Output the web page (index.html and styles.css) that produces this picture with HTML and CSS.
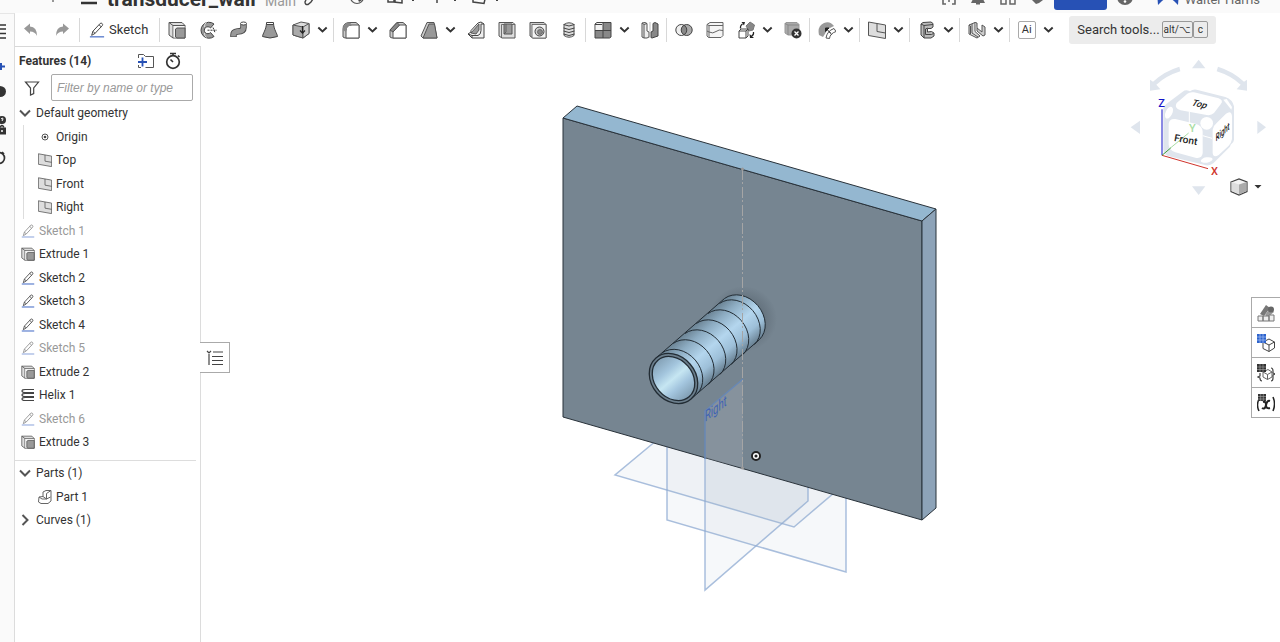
FILE: index.html
```html
<!DOCTYPE html>
<html lang="en">
<head>
    <meta charset="UTF-8">
    <meta name="viewport" content="width=device-width, initial-scale=1.0">
    <title>transducer_wall</title>
    <link rel="stylesheet" href="styles.css">
</head>
<body>
    <!-- shared icons -->
    <svg class="sprite" aria-hidden="true">
        <symbol id="i-chevron" viewBox="0 0 10 10"><path d="M1.2 3.2 5 6.8l3.8-3.6" fill="none" stroke="#333" stroke-width="1.7"/></symbol>
        <symbol id="i-fold" viewBox="0 0 12 12"><path d="M1 3.5 6 8.5l5-5" fill="none" stroke="#555" stroke-width="2"/></symbol>
        <symbol id="i-sketch" viewBox="0 0 18 18"><path d="M3 15l1.4-4.6L12.6 1.6q1.2-.8 2.2.2t.2 2.2L6.8 12.8zM4.4 10.4l2.4 2.4M11.2 3l2.5 2.4" fill="none" stroke="#444" stroke-width="1.1"/><path d="M1 16.7h16" stroke="#3f67c4" stroke-width="1.3"/></symbol>
        <symbol id="i-extrude" viewBox="0 0 18 18"><path d="M1 1.500h13l3 3V17H5l-4-3z" fill="#ddd" stroke="#555"/><path d="M1 1.500l4 3h12M5 4.500V17" fill="none" stroke="#555"/><path d="M5.500 5h11v11.500h-11z" fill="#f5f5f5"/><path d="M7.500 8l1.500-1h8v10H9l-1.500-1z" fill="#999" stroke="#555"/></symbol>
        <symbol id="i-plane" viewBox="0 0 18 18"><path d="M.5 1l17 3v13.500l-17-3z" fill="#ddd" stroke="#555"/><path d="M9 2.500v8l8.500 1.500" fill="none" stroke="#555"/></symbol>
    </svg>

    <header class="topbar">
        <div class="doc">
            <svg class="doc-mark" width="10" height="8" viewBox="0 0 10 8"><path d="M5 0v4" stroke="#555" stroke-width="1.2"/></svg>
            <svg width="16" height="14" viewBox="0 0 16 14"><path d="M0 5h16M0 11h16" stroke="#333" stroke-width="2.500"/></svg>
            <h1>transducer_wall</h1>
            <span class="branch">Main</span>
            <svg width="12" height="14" viewBox="0 0 12 14"><path d="M3 8l-1 2q0 3 3 2.500l3-2.500 2-3" fill="none" stroke="#444" stroke-width="1.400"/></svg>
        </div>
        <div class="doc-tools">
            <svg class="eye" width="16" height="14" viewBox="0 0 16 14"><circle cx="8" cy="5" r="6.500" fill="none" stroke="#555" stroke-width="1.200"/><path d="M8 5l2 5 3-2z" fill="#444"/></svg>
            <svg width="28" height="14" viewBox="0 0 28 14"><path d="M1 10V4h7v6zM7 10V4h8v7z" fill="none" stroke="#444" stroke-width="1.500"/><path d="M24 7l2 2 2-2" fill="none" stroke="#444"/></svg>
            <svg width="28" height="14" viewBox="0 0 28 14"><path d="M8 4v7" stroke="#444" stroke-width="1.500"/><path d="M24 7l2 2 2-2" fill="none" stroke="#444"/></svg>
            <svg width="30" height="14" viewBox="0 0 30 14"><path d="M2 3v7l11 1.500L15 3" fill="none" stroke="#444" stroke-width="1.500"/><path d="M24 7l2 2 2-2" fill="none" stroke="#444"/></svg>
        </div>
        <div class="account">
            <svg width="14" height="14" viewBox="0 0 14 14"><path d="M4 12H1V3M10 12h3V3M6 9h2" fill="none" stroke="#666" stroke-width="1.600"/></svg>
            <svg width="16" height="14" viewBox="0 0 16 14"><path d="M3 1h10v6l2 4H1l2-4zM6 11h4v1.500H6z" fill="#666"/></svg>
            <svg width="16" height="14" viewBox="0 0 16 14"><path d="M1 5h5v7H1zM10 5h5v7h-5z" fill="none" stroke="#666" stroke-width="1.500"/></svg>
            <svg width="14" height="14" viewBox="0 0 14 14"><path d="M1 2h12v6l-4 3-3 1-2-2-3-3z" fill="#666"/></svg>
            <button type="button" class="share">Share</button>
            <svg width="16" height="14" viewBox="0 0 16 14"><circle cx="8" cy="5" r="8" fill="#666"/><circle cx="8" cy="9.500" r="1.300" fill="#fff"/></svg>
            <svg class="avatar" width="22" height="14" viewBox="0 0 22 14"><path d="M0 0h22l-1 13-4-4q-6-5-12 0l-4 4z" fill="#2751b5"/></svg>
            <span class="user">Walter Harris</span>
        </div>
    </header>

    <div class="app">
        <nav class="rail">
            <svg width="15" height="200" viewBox="0 0 15 200">
                <path d="M0 11h6M0 15h6M0 19.500h6M0 24h6" stroke="#333" stroke-width="1.600"/>
                <path d="M0 52.500h5M1 49v7" stroke="#2751b5" stroke-width="2"/>
                <ellipse cx="0" cy="77.500" rx="6" ry="5.500" fill="#333"/>
                <circle cx="2" cy="106" r="4" fill="#333"/><path d="M1 105q2-2 2 0l-1 2" fill="none" stroke="#fff"/>
                <path d="M0 113.500h6v7H0z" fill="#333"/><path d="M0 113.500q2-4 4 0" fill="none" stroke="#333" stroke-width="1.500"/><circle cx="2" cy="117" r="1" fill="#fff"/>
                <circle cx="-1" cy="144" r="5.500" fill="none" stroke="#333" stroke-width="1.700"/><path d="M2 138l2 2" stroke="#333" stroke-width="1.700"/>
            </svg>
        </nav>

        <div class="workspace">
            <div class="toolbar">
                <div class="group history">
                    <button type="button" class="tool" aria-label="Undo"><svg viewBox="0 0 18 18"><path d="M2 7.500L8 2.500v3q7 .4 7 9.500-1.800-4.500-7-4.500v2.500z" fill="#999"/></svg></button>
                    <button type="button" class="tool" aria-label="Redo"><svg viewBox="0 0 18 18"><path d="M16 7.500l-6-5v3q-7 .4-7 9.500 1.800-4.500 7-4.500v2.500z" fill="#999"/></svg></button>
                </div>
                <div class="group sketch">
                    <button type="button" class="tool-text"><svg width="16" height="16"><use href="#i-sketch"/></svg>Sketch</button>
                </div>
                <div class="group">
                    <button type="button" class="tool" aria-label="Extrude"><svg><use href="#i-extrude"/></svg></button>
                    <button type="button" class="tool" aria-label="Revolve"><svg viewBox="0 0 18 18"><path d="M15 3A8 8 0 1 0 15 15.500l-3.500-4a3.500 3.500 0 1 1 0-4.500z" fill="#999" stroke="#444"/><path d="M7.500 1.500Q5 3 5.500 6M7.500 16.500Q5 15 5.500 12" fill="none" stroke="#ddd"/><path d="M8.500 9.200H18M14 6.500l2 5" stroke="#333" stroke-dasharray="2 1"/></svg></button>
                    <button type="button" class="tool" aria-label="Sweep"><svg viewBox="0 0 18 18"><path d="M3.500 16V14q0-3 4-3.500 6 0 6-4V3" fill="none" stroke="#444" stroke-width="6.500"/><path d="M3.500 15.400V14q0-3 4-3.500 6 0 6-4V3" fill="none" stroke="#999" stroke-width="4.800"/><ellipse cx="13.500" cy="2.500" rx="3" ry="1.500" fill="#fff" stroke="#444"/></svg></button>
                    <button type="button" class="tool" aria-label="Loft"><svg viewBox="0 0 18 18"><path d="M5.500 2.500C5 9 2 12 1.500 15.500q7.500 3 15 0C16 12 13 9 12.500 2.500z" fill="#999" stroke="#444"/><path d="M5.500 1.500h7v2h-7z" fill="#fff" stroke="#444"/></svg></button>
                    <button type="button" class="tool" aria-label="Thicken"><svg viewBox="0 0 18 18"><path d="M1 4l8-3 8 1.500v10L11 17 1 14z" fill="#ddd" stroke="#555"/><path d="M1 4l10 2V17L1 14z" fill="#aaa" stroke="#555"/><path d="M11 6l6-3.500v10L11 17z" fill="#ccc" stroke="#555"/><path d="M10.500 5v7M8 9.500l2.500 2.700L13 9.500" fill="none" stroke="#222" stroke-width="1.200"/></svg></button>
                    <button type="button" class="more" aria-label="More solids"><svg><use href="#i-chevron"/></svg></button>
                </div>
                <div class="group">
                    <button type="button" class="tool" aria-label="Fillet"><svg viewBox="0 0 18 18"><path d="M1 16V8q0-6.500 7-6.500h6L17 4v13H3z" fill="#ccc" stroke="#555"/><path d="M4 17V10q0-6 6-6h7v13z" fill="#fff" stroke="#555"/><path d="M1 9q0-7.500 7-7.500L10 4q-6 0-6 7z" fill="#888"/></svg></button>
                    <button type="button" class="more" aria-label="More fillets"><svg><use href="#i-chevron"/></svg></button>
                    <button type="button" class="tool" aria-label="Chamfer"><svg viewBox="0 0 18 18"><path d="M1 16V9l7-7.500h6L17 4v13H3z" fill="#ccc" stroke="#555"/><path d="M4 17v-6l6.500-7H17v13z" fill="#fff" stroke="#555"/><path d="M1 9l7-7.500L10.500 4 4 11z" fill="#888" stroke="#555"/></svg></button>
                    <button type="button" class="tool" aria-label="Draft"><svg viewBox="0 0 18 18"><path d="M1 15L7 1.500h7L17 17H3z" fill="#ccc" stroke="#555"/><path d="M3 17L9 3h5.500L17 17z" fill="#999" stroke="#555"/></svg></button>
                    <button type="button" class="more" aria-label="More drafts"><svg><use href="#i-chevron"/></svg></button>
                    <button type="button" class="tool" aria-label="Rib"><svg viewBox="0 0 18 18"><path d="M1 13l3-2V9.500L11 2l3-1 3 2v14H5z" fill="#eee" stroke="#444"/><path d="M4 12l8-9v6l-3 4z" fill="#999" stroke="#444" stroke-width=".8"/><path d="M1 13l4 1.500h6q3-1 3-5V3l3 0M5 14.500V17" fill="none" stroke="#444"/></svg></button>
                    <button type="button" class="tool" aria-label="Shell"><svg viewBox="0 0 18 18"><path d="M1 1.500h14l2 2V17H4l-3-2z" fill="#ddd" stroke="#555"/><path d="M3.500 3.500H17M3.500 3.500V17" stroke="#555" stroke-width=".8"/><path d="M6 3h8v10H6z" fill="#999" stroke="#555"/><path d="M8 3v8l-2 2" fill="none" stroke="#555" stroke-width=".8"/></svg></button>
                    <button type="button" class="tool" aria-label="Hole"><svg viewBox="0 0 18 18"><path d="M1 1.500h14l2 2V17H4l-3-2z" fill="#ccc" stroke="#555"/><path d="M3 3.500h14V17H3z" fill="#f4f4f4" stroke="#555" stroke-width=".8"/><circle cx="10.500" cy="10.500" r="4.500" fill="#ccc" stroke="#444"/><circle cx="11" cy="11" r="2.500" fill="#888" stroke="#555" stroke-width=".7"/></svg></button>
                    <button type="button" class="tool" aria-label="Thread"><svg viewBox="0 0 18 18"><path d="M4 3.500q5-3.500 10 0v11q-5 3.500-10 0z" fill="#ddd" stroke="#555"/><path d="M3.500 3.500q5.500 3 11 0M3.500 7q5.500 3 11 0M3.500 10q5.500 3 11 0M3.500 13q5.500 3 11 0" fill="none" stroke="#444"/></svg></button>
                </div>
                <div class="group">
                    <button type="button" class="tool" aria-label="Pattern"><svg viewBox="0 0 18 18"><path d="M1 3l2-1.500h14V16l-1.500 1H1z" fill="#888" stroke="#444"/><path d="M1.500 3.500L3 2h6v7H1.500z" fill="#f2f2f2"/><path d="M9 1.500V17M1 9.500h16M1 3.500h7" fill="none" stroke="#444"/></svg></button>
                    <button type="button" class="more" aria-label="More patterns"><svg><use href="#i-chevron"/></svg></button>
                    <button type="button" class="tool" aria-label="Mirror"><svg viewBox="0 0 18 18"><path d="M1 2l3-.5 2 1V10l2 1v5l-2 1H3l-2-1z" fill="#eee" stroke="#555"/><path d="M1 2l2 1.500V17M3 3.500l3-1" fill="none" stroke="#555"/><path d="M17 3l-3-1.500-2 1V10l-2 1v5.500l1 .5 6-2z" fill="#888" stroke="#444"/><path d="M9 1v16" stroke="#aaa" stroke-width=".8"/></svg></button>
                </div>
                <div class="group">
                    <button type="button" class="tool" aria-label="Boolean"><svg viewBox="0 0 18 18"><circle cx="6.300" cy="9" r="5.500" fill="#eee"/><circle cx="11.700" cy="9" r="5.500" fill="#aaa"/><path d="M9 4.200a5.500 5.500 0 0 1 0 9.600 5.500 5.500 0 0 1 0-9.600" fill="#888"/><g fill="none" stroke="#444"><circle cx="6.300" cy="9" r="5.500"/><circle cx="11.700" cy="9" r="5.500"/></g></svg></button>
                    <button type="button" class="tool" aria-label="Split"><svg viewBox="0 0 18 18"><path d="M1 3.500l3-2h13v13l-2 2H2.500L1 15z" fill="#f5f5f5" stroke="#666"/><path d="M1 3.500l2 1h14M3 4.500v12M1 10l2 1q4 2 7-.5t7-1" fill="none" stroke="#666"/></svg></button>
                    <button type="button" class="tool" aria-label="Transform"><svg viewBox="0 0 18 18"><path d="M9 5l4-4 4.500 3-1.500 5-4 1z" fill="#888" stroke="#777"/><path d="M2 10h7v7H2zM2 10l2-2h7l-2 2M11 8v7l-2 2" fill="#fff" stroke="#444"/><path d="M3.500 7.500q-.5-3 2-4.500" fill="none" stroke="#222" stroke-width="1.200"/><path d="M4.500 1H8L7 4.500zM12.500 13l.5 4h4z" fill="#222"/><path d="M16.500 11q.5 3-2 4" fill="none" stroke="#222" stroke-width="1.200"/></svg></button>
                    <button type="button" class="more" aria-label="More booleans"><svg><use href="#i-chevron"/></svg></button>
                    <button type="button" class="tool" aria-label="Delete part"><svg viewBox="0 0 18 18"><path d="M1 2.500l1-1h11l2 2V14H4l-3-2z" fill="#aaa" stroke="#999"/><path d="M1 2.500l3 1.500h11M4 4v10" fill="none" stroke="#888"/><circle cx="12.500" cy="12.500" r="5" fill="#333"/><path d="M10.500 10.500l4 4m0-4l-4 4" stroke="#fff" stroke-width="1.300"/></svg></button>
                </div>
                <div class="group">
                    <button type="button" class="tool" aria-label="Modify surface"><svg viewBox="0 0 18 18"><path d="M1 14Q-1 5 6 2q6-2.500 10 3l-6 3-5 8z" fill="#999"/><path d="M8 17q1-7 8-9.500l2 3q-6 2-6.500 7zM11 10.500l3 3.500" fill="#fff" stroke="#555"/><path d="M12.500 12L8 7.500M7.500 10.500V7h3.500z" fill="#222" stroke="#222"/></svg></button>
                    <button type="button" class="more" aria-label="More surfaces"><svg><use href="#i-chevron"/></svg></button>
                </div>
                <div class="group">
                    <button type="button" class="tool" aria-label="Plane"><svg><use href="#i-plane"/></svg></button>
                    <button type="button" class="more" aria-label="More planes"><svg><use href="#i-chevron"/></svg></button>
                </div>
                <div class="group">
                    <button type="button" class="tool" aria-label="Frame"><svg viewBox="0 0 18 18"><path d="M3 3l2-1.500 8-.5 2 1.500V6l-2 1.500H9.500V11l4-.5L16 12v3l-3 2H6l-3-3z" fill="#bbb" stroke="#444"/><path d="M3 3l3 1.500 9-1M6 4.500V17M7.500 13.500h6l2-1M9.500 7L7.500 8v5.500" fill="none" stroke="#444"/></svg></button>
                    <button type="button" class="more" aria-label="More frames"><svg><use href="#i-chevron"/></svg></button>
                </div>
                <div class="group">
                    <button type="button" class="tool" aria-label="Sheet metal"><svg viewBox="0 0 18 18"><path d="M1 4l6-2.500v9L12 15l-3 2-8-4z" fill="#ddd" stroke="#555"/><path d="M7 1.500L9 2v8l6 5 2-1V6l-3-2v7l-5-4" fill="#ccc" stroke="#555"/><path d="M4 3v9l6 4M1 4l1.500 1v8" fill="none" stroke="#555"/></svg></button>
                    <button type="button" class="more" aria-label="More sheet metal"><svg><use href="#i-chevron"/></svg></button>
                </div>
                <div class="group">
                    <button type="button" class="tool"><span class="ai">Ai</span></button>
                    <button type="button" class="more" aria-label="More custom features"><svg><use href="#i-chevron"/></svg></button>
                </div>
                <button type="button" class="search">Search tools... <span class="keys"><kbd>alt/⌥</kbd><kbd>c</kbd></span></button>
            </div>

            <div class="main">
                <aside class="features">
                    <div class="features-head">
                        <h2>Features (14)</h2>
                        <button type="button" aria-label="Add folder"><svg width="18" height="16" viewBox="0 0 18 16"><path d="M1.500 5V1.500h5l2 2h8v11h-8M1.500 12v2.500H4" fill="none" stroke="#555"/><path d="M1 9h9M5.500 4.500v9" stroke="#2751b5" stroke-width="1.800"/></svg></button>
                        <button type="button" aria-label="Regeneration times"><svg width="16" height="18" viewBox="0 0 16 18"><circle cx="8" cy="10" r="6.300" fill="none" stroke="#333" stroke-width="1.700"/><path d="M5 1.500h6M8 1.500v2M13 3.500l1.500 1.500M8 10L5.500 7.500" stroke="#333" stroke-width="1.600"/></svg></button>
                    </div>
                    <div class="filter">
                        <label for="filter"><svg width="16" height="16" viewBox="0 0 16 16"><path d="M1.500 2h13L9.700 8v5.500L6.500 15V8z" fill="none" stroke="#444" stroke-width="1.200"/></svg></label>
                        <input type="text" id="filter" placeholder="Filter by name or type" aria-label="Filter by name or type">
                    </div>
                    <div class="row folder"><svg><use href="#i-fold"/></svg>Default geometry</div>
                    <ul class="tree nested">
                        <li class="row"><svg viewBox="0 0 14 14"><circle cx="7" cy="7" r="3" fill="none" stroke="#555"/><circle cx="7" cy="7" r="1.300" fill="#444"/></svg>Origin</li>
                        <li class="row"><svg><use href="#i-plane"/></svg>Top</li>
                        <li class="row"><svg><use href="#i-plane"/></svg>Front</li>
                        <li class="row"><svg><use href="#i-plane"/></svg>Right</li>
                    </ul>
                    <ul class="tree">
                        <li class="row hidden"><svg><use href="#i-sketch"/></svg>Sketch 1</li>
                        <li class="row"><svg><use href="#i-extrude"/></svg>Extrude 1</li>
                        <li class="row"><svg><use href="#i-sketch"/></svg>Sketch 2</li>
                        <li class="row"><svg><use href="#i-sketch"/></svg>Sketch 3</li>
                        <li class="row"><svg><use href="#i-sketch"/></svg>Sketch 4</li>
                        <li class="row hidden"><svg><use href="#i-sketch"/></svg>Sketch 5</li>
                        <li class="row"><svg><use href="#i-extrude"/></svg>Extrude 2</li>
                        <li class="row"><svg viewBox="0 0 14 14"><path d="M13 1.500H4Q1 1.500 1 3t3 1.500h9M13 5.500H4Q1 5.500 1 7t3 1.500h9M13 9.500H4Q1 9.500 1 11t3 1.500h9" fill="none" stroke="#444" stroke-width="1.200"/></svg>Helix 1</li>
                        <li class="row hidden"><svg><use href="#i-sketch"/></svg>Sketch 6</li>
                        <li class="row"><svg><use href="#i-extrude"/></svg>Extrude 3</li>
                    </ul>
                    <div class="parts">
                        <div class="row folder"><svg><use href="#i-fold"/></svg>Parts (1)</div>
                        <ul class="tree part-list">
                            <li class="row"><svg viewBox="0 0 14 14"><path d="M1 7l4-.5V2l3-1.500h5V11l-3 2.500H3L.5 12z" fill="#fff" stroke="#666"/><path d="M1 7l3 2h4.500l4-2M8.500 9V3.500L13 .5M5 6.500L8.500 9" fill="none" stroke="#666"/></svg>Part 1</li>
                        </ul>
                        <div class="row folder closed"><svg><use href="#i-fold"/></svg>Curves (1)</div>
                    </div>
                </aside>

                <main class="canvas">
                    <svg class="scene" viewBox="201 46 1079 596">
                        <defs>
                            <linearGradient id="tube" gradientUnits="userSpaceOnUse" x1="656" y1="358" x2="691" y2="399">
                                <stop offset="0" stop-color="#6c8495"/>
                                <stop offset=".2" stop-color="#8cabc1"/>
                                <stop offset=".5" stop-color="#b4d6ee"/>
                                <stop offset=".75" stop-color="#9dbfd8"/>
                                <stop offset="1" stop-color="#657c8d"/>
                            </linearGradient>
                            <!-- runs along the long axis of the rotated bore ellipse -->
                            <linearGradient id="bore" gradientUnits="userSpaceOnUse" x1="649" y1="378" x2="698" y2="378">
                                <stop offset="0" stop-color="#83a0b5"/>
                                <stop offset=".3" stop-color="#a3c5dd"/>
                                <stop offset=".5" stop-color="#c6e6f2"/>
                                <stop offset=".7" stop-color="#a4c6df"/>
                                <stop offset="1" stop-color="#7f9cb1"/>
                            </linearGradient>
                            <radialGradient id="shade">
                                <stop offset=".6" stop-color="#55626d" stop-opacity=".5"/>
                                <stop offset="1" stop-color="#55626d" stop-opacity="0"/>
                            </radialGradient>
                        </defs>
                        <!-- reference planes -->
                        <g fill="#a9bacb" fill-opacity=".1" stroke="#8eaad2" stroke-opacity=".75" stroke-width="1.500">
                            <path d="M657 440l-42 35 179 52 41-35z"/>
                            <path d="M667 440v80l179 52v-80z"/>
                            <path d="M705 440v150l103-89v-30z"/>
                        </g>
                        <path d="M705 458v43l79 23 24-23v-13z" fill="#a9bacb" fill-opacity=".12"/>
                        <!-- wall plate -->
                        <g stroke="#29323a" stroke-linejoin="round">
                            <path d="M563 118l359 103v299L563 417z" fill="#768591"/>
                            <path d="M563 118l14-12 359 103-14 12z" fill="#94b7d0"/>
                            <path d="M922 221l14-12v299l-14 12z" fill="#8da3b8"/>
                        </g>
                        <path d="M705 411l38-32v89l-38-10z" fill="#a5acb4" fill-opacity=".35"/>
                        <path d="M743 379l-38 32v48" fill="none" stroke="#6888b5" stroke-width="1.500"/>
                        <text class="plane-label" transform="translate(705 422) rotate(-38) skewX(-38)">Right</text>
                        <!-- tube -->
                        <ellipse cx="743" cy="319" rx="34" ry="33" fill="url(#shade)"/>
                        <g stroke="#222c34" fill="none">
                            <path d="M656 358l68.500-59.500A27 22 49.500 0 1 759.500 339.500L691 399z" fill="url(#tube)"/>
                            <path d="M662 353A27 22 49.500 0 1 697 394"/>
                            <path d="M673.300 343.400A27 22 49.500 0 1 708.300 384.400"/>
                            <path d="M685 333.500A27 22 49.500 0 1 720 374.500"/>
                            <path d="M696.300 323.500A27 22 49.500 0 1 731.300 364.500"/>
                            <path d="M708 313.500A27 22 49.500 0 1 743 354.500"/>
                            <path d="M719.500 303.500A27 22 49.500 0 1 754.500 344.500"/>
                            <ellipse cx="673.500" cy="378.500" rx="27" ry="22" transform="rotate(49.500 673.500 378.500)" fill="#6b7e8c" stroke-width="1.300"/>
                            <ellipse cx="673.500" cy="378.500" rx="24" ry="19" transform="rotate(49.500 673.500 378.500)" fill="url(#bore)" stroke-width="1.300"/>
                        </g>
                        <path d="M742.500 169v299" stroke="#a5a5a5" stroke-dasharray="11 2 2 3"/>
                        <circle cx="742.500" cy="169" r="1.500" fill="#999"/>
                        <circle cx="742.500" cy="468" r="1.500" fill="#999"/>
                        <circle cx="756" cy="456" r="3.500" fill="#222" stroke="#222" stroke-width="3"/>
                        <circle cx="756" cy="456" r="2.300" fill="#222" stroke="#fff" stroke-width="1.500"/>
                    </svg>

                    <button type="button" class="list-toggle" aria-label="Toggle feature list"><svg width="18" height="18" viewBox="0 0 18 18"><path d="M1 2l2 2 2-2M3 5v11M7 3h10M6 7.500h11M6 11.500h11M6 15.500h11" fill="none" stroke="#444" stroke-width="1.200"/></svg></button>

                    <svg class="view-cube" width="148" height="144" viewBox="42 33 444 432">
                        <g fill="#dfe5ed">
                            <path d="M266 44l20 26h-40zM266 450l20-26h-40zM62 247l28-20v40zM468 247l-26-20v40z"/>
                            <path d="M120 137v-33l9 6q35-32 79-45l3 14q-42 13-72 40l12 14zM411 137v-33l-9 6q-35-32-78-45l-4 14q42 13 72 40l-12 14z"/>
                            <path d="M160 190q2-8 10-14l48-36q8-6 18-3l4 2q8-7 20-5l86 22q22 8 26 28v100q0 8-10 15l-2 6-50 50q-10 8-22 6l-114-28q-12-4-14-18z"/>
                        </g>
                        <g fill="#fff">
                            <path d="M200 174l32-28q8-6 20-4l74 18q16 6 6 18l-20 26q-8 8-22 6l-78-14q-22-6-12-22z"/>
                            <path d="M176 236q2-16 20-14l60 14q22 6 22 24v64q-2 18-22 14l-60-16q-20-6-20-24z"/>
                            <path d="M308 254q2-12 12-20l28-28q16-12 18 8v68q-2 12-10 20l-30 28q-16 10-18-6z"/>
                            <circle cx="290" cy="235" r="19"/>
                            <ellipse cx="177" cy="203" rx="10" ry="19" transform="rotate(25 177 203)"/>
                            <ellipse cx="290" cy="345" rx="18" ry="8" transform="rotate(-10 290 345)"/>
                            <path d="M340 164l10-2 16 24-2 8z"/>
                        </g>
                        <path d="M238 200v34M278 272l28 8" stroke="#fff" stroke-width="3"/>
                        <path d="M156 331V193" stroke="#1414c8" stroke-width="3"/>
                        <path d="M156 331l138 40" stroke="#d0342c" stroke-width="3"/>
                        <path d="M180 310l56-46" stroke="#a9dda5" stroke-width="3"/>
                        <path d="M156 331l26-22" stroke="#3fa03a" stroke-width="3"/>
                        <text class="face" transform="translate(242 181) rotate(12) skewX(-20)">Top</text>
                        <text class="face front" transform="translate(191 288) rotate(10)">Front</text>
                        <text class="face right" transform="translate(317 290) rotate(-42) skewX(-42)">Right</text>
                        <text class="axis z" x="145" y="186">Z</text>
                        <text class="axis x" x="303" y="389">X</text>
                        <text class="axis y" x="237" y="262">Y</text>
                    </svg>

                    <button type="button" class="view-menu" aria-label="View options"><svg width="32" height="18" viewBox="0 0 32 18"><path d="M1 4l8-3 8 3v9.500L9 17l-8-3.500z" fill="#f3f3f3" stroke="#444" stroke-width="1.200"/><path d="M9 6.500L16.500 4v9L9 16.500z" fill="#aaa"/><path d="M1.500 4L9 6.500V16l-7.500-3z" fill="#ddd"/><path d="M24.500 7h7L28 10.500z" fill="#333"/></svg></button>

                    <div class="side-tabs">
                        <button type="button" aria-label="Appearance"><svg viewBox="0 0 18 18"><path d="M3 10L9 1l4 3-6 8z" fill="#777"/><path d="M8 11l5-7 4 4-6 5z" fill="#999"/><circle cx="14" cy="5.500" r="3" fill="#666"/><path d="M1 12h5v5H1zM6 12h6v5H6zM12 11h5v6h-5z" fill="#eee" stroke="#777"/></svg></button>
                        <button type="button" aria-label="Configurations"><svg viewBox="0 0 18 18"><path d="M6 8l6-3 5.500 3v6L12 17.500 6 14.500zM6 8l6 3 5.500-3M12 11v6.500" fill="#fff" stroke="#444"/><path d="M0 0h9v9H0z" fill="#2d63cc"/><path d="M0 3h9M0 6h9M3 0v9M6 0v9" stroke="#9db9f0" stroke-width=".8"/></svg></button>
                        <button type="button" aria-label="Part properties"><svg viewBox="0 0 18 18"><path d="M6 8l5-2.500L15 8v5l-4.500 2.500L6 13zM6 8l4.500 2.500L15 8M10.500 10.500v5" fill="#fff" stroke="#666"/><path d="M3 9v3l-2 1 2 1q0 3 2 3M14 4q2 0 2 3v2l2 1-2 1v3q0 3-2 3" fill="none" stroke="#444" stroke-width="1.200"/><path d="M0 0h9v8H0z" fill="#333"/><path d="M0 3h9M0 5.500h9M3 0v8M6 0v8" stroke="#aaa" stroke-width=".6"/></svg></button>
                        <button type="button" aria-label="Variables"><svg viewBox="0 0 18 18"><path d="M2 5q-3 6 0 12M16 3q3 7 0 14" fill="none" stroke="#222" stroke-width="1.500"/><path d="M5 14q3 2 4-3t4-4M6 8q3-1 3 3t4 3" fill="none" stroke="#222" stroke-width="2"/><path d="M1 0h8v7H1z" fill="#333"/><path d="M1 2.500h8M1 5h8M3.700 0v7M6.300 0v7" stroke="#aaa" stroke-width=".6"/></svg></button>
                    </div>
                </main>
            </div>
        </div>
    </div>
</body>
</html>
```

FILE: styles.css
```css
* {
    box-sizing: border-box;
}

body {
    margin: 0;
    height: 100vh;
    display: flex;
    flex-direction: column;
    overflow: hidden;
    background-color: #fff;
    color: #333;
    font-family: Roboto, "Noto Sans", sans-serif;
    font-size: 13px;
}

button {
    padding: 0;
    border: none;
    background: none;
    color: inherit;
    font: inherit;
    cursor: pointer;
}

h1,
h2,
ul {
    margin: 0;
    padding: 0;
}

svg {
    display: block;
    flex-shrink: 0;
}

.sprite {
    position: absolute;
    width: 0;
    height: 0;
}

/* document bar, scrolled mostly out of view */
.topbar {
    display: flex;
    align-items: flex-end;
    height: 13px;
    flex-shrink: 0;
    overflow: hidden;
    padding: 0 20px 0 48px;
    background-color: #fafafa;
}

.doc,
.doc-tools,
.account {
    display: flex;
    align-items: flex-end;
}

.doc > svg,
.doc-tools > svg,
.account > svg {
    margin-bottom: 7px;
}

.doc-mark {
    margin-right: 23px;
}

.topbar h1 {
    margin: 0 9px 2px 10px;
    font-size: 21px;
    line-height: 24px;
}

.branch {
    margin: 0 7px 4px 0;
    color: #999;
    font-size: 14px;
    line-height: 16px;
}

.doc-tools {
    gap: 14px;
    margin-left: 34px;
}

.doc-tools .eye {
    margin-right: 8px;
}

.account {
    gap: 14px;
    margin-left: auto;
}

.share {
    width: 53px;
    height: 30px;
    margin: 0 -4px 3px -4px;
    padding-bottom: 10px;
    border-radius: 3px;
    background-color: #2751b5;
    color: #fff;
}

.account .avatar {
    margin: 0 -8px 7px 10px;
}

.user {
    margin-bottom: 5px;
    color: #666;
    font-size: 13px;
    line-height: 16px;
}

.app {
    display: flex;
    flex: 1;
    min-height: 0;
}

.rail {
    width: 15px;
    flex-shrink: 0;
    overflow: hidden;
    border-top: 1px solid #e6e6e6;
    border-right: 1px solid #dcdcdc;
    background-color: #fafafa;
}

.workspace {
    display: flex;
    flex-direction: column;
    flex: 1;
    min-width: 0;
}

.toolbar {
    display: flex;
    align-items: center;
    height: 33px;
    flex-shrink: 0;
}

.group {
    display: flex;
    align-items: center;
    height: 24px;
    padding: 0 1px;
    border-left: 1px solid #d8d8d8;
}

.group.history {
    border-left: none;
    padding: 0 2px 0 0;
}

.group.sketch {
    padding: 0 11px 0 9px;
}

.tool {
    display: flex;
    align-items: center;
    justify-content: center;
    width: 31px;
    height: 24px;
}

.tool svg {
    width: 18px;
    height: 18px;
}

.tool-text {
    display: flex;
    align-items: center;
    gap: 4px;
}

.more {
    width: 16px;
    height: 24px;
    padding-left: 1px;
}

.more svg {
    width: 11px;
    height: 11px;
}

.ai {
    width: 18px;
    height: 18px;
    border: 1px solid #aaa;
    border-radius: 2px;
    font-size: 11px;
    line-height: 16px;
}

.search {
    display: flex;
    align-items: center;
    gap: 2px;
    height: 28px;
    margin-left: 10px;
    padding: 0 8px;
    border-radius: 3px;
    background-color: #ececec;
    white-space: nowrap;
}

.keys {
    display: flex;
}

kbd {
    height: 17px;
    padding: 0 1px;
    border: 1px solid #999;
    border-radius: 2px;
    font-family: inherit;
    font-size: 10px;
    line-height: 16px;
}

kbd + kbd {
    padding: 0 4px;
}

.main {
    display: flex;
    flex: 1;
    min-height: 0;
}

.features {
    width: 186px;
    flex-shrink: 0;
    border-top: 1px solid #d8d8d8;
    border-right: 1px solid #dcdcdc;
    font-size: 12px;
}

.features-head {
    display: flex;
    align-items: center;
    height: 27px;
    gap: 10px;
    padding: 1px 19px 0 4px;
}

.features-head h2 {
    margin-right: auto;
    font-size: 12px;
}

.filter {
    display: flex;
    align-items: center;
    gap: 11px;
    padding: 0 7px 0 9px;
}

.filter input {
    flex: 1;
    min-width: 0;
    height: 27px;
    padding: 0 5px;
    border: 1px solid #aaa;
    border-radius: 2px;
    color: #333;
    font-family: "Liberation Sans", Arial, sans-serif;
    font-size: 12px;
    font-style: italic;
}

.filter input::placeholder {
    color: #999;
}

.tree {
    list-style: none;
}

.row {
    display: flex;
    align-items: center;
    gap: 4px;
    height: 24px;
    padding-left: 6px;
}

.tree .row:nth-child(odd) {
    height: 23px;
}

.row svg {
    width: 14px;
    height: 14px;
}

.row.folder {
    gap: 5px;
    padding-left: 4px;
}

.row.folder svg {
    width: 12px;
    height: 12px;
}

.row.closed svg {
    transform: rotate(-90deg);
}

.row.hidden {
    color: #999;
}

.row.hidden svg {
    opacity: 0.6;
}

.nested {
    margin-left: 8px;
    border-left: 1px solid #ddd;
}

.nested .row {
    padding-left: 14px;
}

.part-list .row {
    padding-left: 23px;
}

.parts {
    margin: 6px 4px 0 0;
    border-top: 1px solid #ddd;
}

.canvas {
    position: relative;
    flex: 1;
    min-width: 0;
}

.scene {
    width: 100%;
    height: 100%;
}

.plane-label {
    fill: #4063b4;
    font-size: 12px;
}

.list-toggle {
    position: absolute;
    top: 296px;
    left: -1px;
    display: flex;
    align-items: center;
    justify-content: center;
    width: 30px;
    height: 31px;
    border: 1px solid #aaa;
    border-left: none;
    background-color: #fff;
}

.view-cube {
    position: absolute;
    top: 10px;
    right: 8px;
}

/* cube labels use the 3x units of its viewBox */
.face {
    fill: #222;
    font-size: 27px;
    font-weight: 500;
}

.face.front {
    font-size: 30px;
}

.face.right {
    font-size: 24px;
}

.axis {
    font-size: 33px;
    font-weight: 500;
}

.axis.z {
    fill: #1414c8;
}

.axis.x {
    fill: #d0342c;
}

.axis.y {
    fill: #a9dda5;
}

.view-menu {
    position: absolute;
    top: 132px;
    right: 18px;
}

.side-tabs {
    position: absolute;
    top: 251px;
    right: 0;
    width: 29px;
    border: 1px solid #aaa;
    border-right: none;
    background-color: #fff;
}

.side-tabs button {
    display: flex;
    align-items: center;
    justify-content: center;
    width: 100%;
    height: 29px;
}

.side-tabs button + button {
    height: 30px;
    border-top: 1px solid #aaa;
}

.side-tabs svg {
    width: 18px;
    height: 18px;
}
```
